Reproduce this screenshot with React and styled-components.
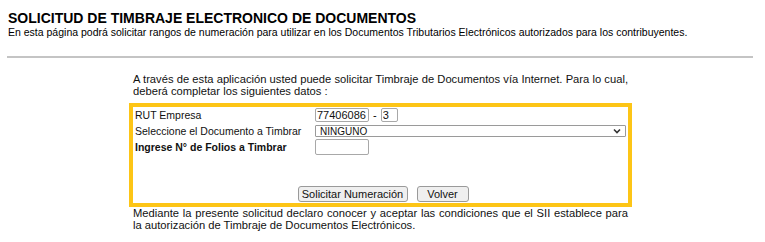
import React from 'react'
import styled, { createGlobalStyle } from 'styled-components'

const GlobalStyle = createGlobalStyle`
  body {
    margin: 0;
    background: #ffffff;
    font-family: "Liberation Sans", Arial, sans-serif;
    color: #000000;
  }
`

function App() {
  return (
    <Page>
      <GlobalStyle />
      {/* encabezado */}
      <Header>
        <Title>SOLICITUD DE TIMBRAJE ELECTRONICO DE DOCUMENTOS</Title>
        <Subtitle>
          En esta página podrá solicitar rangos de numeración para utilizar en los Documentos Tributarios Electrónicos autorizados para los contribuyentes.
        </Subtitle>
      </Header>
      <Rule />

      {/* formulario */}
      <Column>
        <Text>
          A través de esta aplicación usted puede solicitar Timbraje de Documentos vía Internet. Para lo cual, deberá completar los siguientes datos :
        </Text>
        <Box>
          <Row>
            <Label>RUT Empresa</Label>
            <Field>
              <Input width="54px" defaultValue="77406086" />
              <Dash>-</Dash>
              <Input width="17px" defaultValue="3" />
            </Field>
          </Row>
          <Row>
            <Label>Seleccione el Documento a Timbrar</Label>
            <Field>
              <Select>
                <span>NINGUNO</span>
                <svg width="8" height="6" viewBox="0 0 8 6">
                  <path d="M1 1.5 L4 4.5 L7 1.5" fill="none" stroke="#333" strokeWidth="1.6" />
                </svg>
              </Select>
            </Field>
          </Row>
          <Row>
            <Label bold>Ingrese N° de Folios a Timbrar</Label>
            <Field>
              <Input width="54px" tall defaultValue="" />
            </Field>
          </Row>
          <Buttons>
            <Button width="110px">Solicitar Numeración</Button>
            <Button width="52px">Volver</Button>
          </Buttons>
        </Box>
        <Text>
          Mediante la presente solicitud declaro conocer y aceptar las condiciones que el SII establece para la autorización de Timbraje de Documentos Electrónicos.
        </Text>
      </Column>
    </Page>
  )
}

const Page = styled.div`
  width: 765px;
  height: 242px;
  overflow: hidden;
`
const Header = styled.div`
  padding: 10px 8px 0 8px;
`
const Title = styled.h1`
  margin: 0;
  font-size: 14px;
  line-height: 16px;
  font-weight: bold;
`
const Subtitle = styled.p`
  margin: 0;
  font-size: 10.5px;
  line-height: 12px;
`
const Rule = styled.div`
  margin: 18px 12px 0 7px;
  height: 2px;
  background: #c4c4c4;
`
const Column = styled.div`
  width: 503px;
  margin: 15px 0 0 129px;
`
const Text = styled.p`
  margin: 0;
  padding: 0 4px;
  font-size: 11.2px;
  line-height: 12px;
  text-align: justify;
  color: #111;
`
const Box = styled.div`
  margin-top: 6px;
  height: 104px;
  box-sizing: border-box;
  border: 4px solid #fdc516;
  padding: 0 2px 1px 2px;
  display: flex;
  flex-direction: column;
`
const Row = styled.div`
  display: flex;
  align-items: center;
  min-height: 16px;
`
const Label = styled.div`
  width: 180px;
  flex-shrink: 0;
  font-size: 10.5px;
  font-weight: ${(p) => (p.bold ? 'bold' : 'normal')};
  color: #111;
`
const Field = styled.div`
  flex: 1;
  display: flex;
  align-items: center;
`
const Input = styled.input`
  width: ${(p) => p.width};
  height: ${(p) => (p.tall ? '16px' : '14px')};
  box-sizing: border-box;
  padding: 0 1px;
  border: 1px solid #a8a8a8;
  border-radius: 2px;
  font-family: "Liberation Sans", Arial, sans-serif;
  font-size: 11px;
  color: #111;
`
const Dash = styled.span`
  font-size: 11px;
  margin: 0 4px;
`
const Select = styled.div`
  width: 311px;
  height: 12px;
  box-sizing: border-box;
  border: 1px solid #9a9a9a;
  border-radius: 1px;
  padding: 0 4px 0 4px;
  display: flex;
  align-items: center;
  justify-content: space-between;
  font-size: 10px;
  color: #111;
`
const Buttons = styled.div`
  margin-top: auto;
  display: flex;
  justify-content: center;
  gap: 9px;
  padding-left: 5px;
`
const Button = styled.button`
  width: ${(p) => p.width};
  height: 16px;
  padding: 0;
  border: 1px solid #9a9a9a;
  border-radius: 3px;
  background: #efefef;
  font-family: "Liberation Sans", Arial, sans-serif;
  font-size: 11px;
  color: #111;
`

export default App
